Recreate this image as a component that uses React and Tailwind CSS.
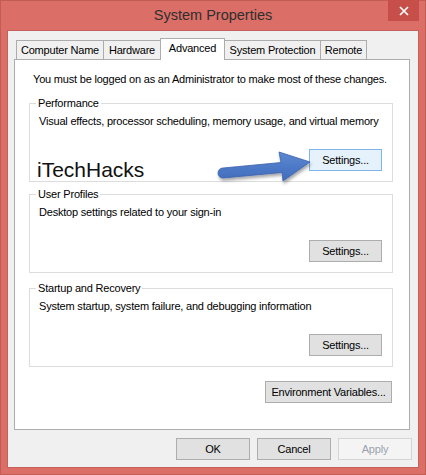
import React from 'react';

const tabs = [
  { label: 'Computer Name', w: 'w-[88px]' },
  { label: 'Hardware', w: 'w-[58px]' },
  { label: 'Advanced', w: 'w-[65px]', active: true },
  { label: 'System Protection', w: 'w-[97px]' },
  { label: 'Remote', w: 'w-[47px]' },
];

const Button = ({ children, variant = 'normal', className = '' }) => {
  const styles = {
    normal: 'bg-[#e1e1e1] border-[#adadad] text-black',
    hover: 'bg-[#e5f1fb] border-[#7eb4ea] text-black',
    disabled: 'bg-[#f4f4f4] border-[#d5d5d5] text-[#9aa3ad]',
  };
  return (
    <div className={`h-[22px] border flex items-center justify-center leading-[15px] ${styles[variant]} ${className}`}>
      {children}
    </div>
  );
};

const Group = ({ title, text, hover, className = '' }) => (
  <fieldset className={`w-[364px] ml-[14px] border border-[#dcdcdc] pl-[9px] pr-[10px] pb-[10px] ${className}`}>
    <legend className="-ml-[3px] px-[2px] leading-[14px]">{title}</legend>
    <div className="mt-[4px] leading-[15px]">{text}</div>
    <div className="mt-[20px] flex justify-end">
      <Button variant={hover ? 'hover' : 'normal'} className="w-[73px]">Settings...</Button>
    </div>
  </fieldset>
);

// blue callout arrow pointing at the Performance "Settings..." button
const Arrow = () => (
  <svg width="104" height="42" viewBox="0 0 104 42" className="absolute left-[200px] top-[88px]">
    <defs>
      <linearGradient id="ag" x1="0" y1="0" x2="0" y2="1">
        <stop offset="0" stopColor="#5d88d2" />
        <stop offset="1" stopColor="#3f6cbc" />
      </linearGradient>
      <filter id="sh" x="-20%" y="-30%" width="140%" height="170%">
        <feDropShadow dx="1" dy="2.5" stdDeviation="1.6" floodColor="#000" floodOpacity="0.35" />
      </filter>
    </defs>
    <path
      d="M8 20 L66 14.5 L64 4 L95 14 L68 33 L67 24.5 L8 30 A5 5 0 0 1 8 20 Z"
      fill="url(#ag)"
      stroke="#3a62ad"
      strokeWidth="0.8"
      strokeLinejoin="round"
      filter="url(#sh)"
    />
  </svg>
);

export default function App() {
  return (
    <div className="w-[426px] h-[475px] bg-[#db6e66] border border-[#c35c54] flex flex-col font-['Liberation_Sans',Arial,sans-serif] text-[11px] tracking-[-0.2px] text-black">
      {/* title bar */}
      <div className="relative h-[29px] flex items-center justify-center">
        <span className="text-[14.5px] tracking-normal text-[#2f2f2f] mt-[1px]">System Properties</span>
        <div className="absolute right-[6px] -top-px w-[31px] h-[21px] bg-[#c74f4a] flex items-center justify-center">
          <svg width="10" height="10" viewBox="0 0 10 10">
            <path d="M1 1 L9 9 M9 1 L1 9" stroke="#fff" strokeWidth="1.7" />
          </svg>
        </div>
      </div>

      {/* client */}
      <div className="mx-[6px] mb-[6px] flex-1 bg-[#f0f0f0] border border-[#c6605a] flex flex-col">
        {/* tabs */}
        <div className="ml-[8px] pt-[7px] flex items-end">
          {tabs.map((t, i) => (
            <div
              key={t.label}
              className={`${t.w} ${i > 0 ? '-ml-px' : ''} border-t border-l border-r border-[#acacac] flex items-center justify-center leading-[15px] ${
                t.active ? 'h-[22px] -mb-px bg-white relative z-10 pb-[2px]' : 'h-[19px] bg-[#f0f0f0]'
              }`}
            >
              {t.label}
            </div>
          ))}
        </div>

        {/* panel */}
        <div className="relative ml-[6px] w-[396px] h-[371px] bg-white border border-[#acacac] pt-[12px]">
          <div className="pl-[18px] leading-[15px]">
            You must be logged on as an Administrator to make most of these changes.
          </div>

          <Group
            className="mt-[9px]"
            title="Performance"
            text="Visual effects, processor scheduling, memory usage, and virtual memory"
            hover
          />
          <Group className="mt-[5px]" title="User Profiles" text="Desktop settings related to your sign-in" />
          <Group
            className="mt-[8px]"
            title="Startup and Recovery"
            text="System startup, system failure, and debugging information"
          />

          <div className="mt-[14px] mr-[17px] flex justify-end">
            <Button className="w-[127px]">Environment Variables...</Button>
          </div>

          {/* watermark + arrow overlay */}
          <div className="absolute left-[22px] top-[99px] text-[21px] leading-[21px] tracking-normal text-[#111]">
            iTechHacks
          </div>
          <Arrow />
        </div>

        {/* dialog buttons */}
        <div className="mt-[8px] mr-[6px] flex justify-end gap-[7px]">
          <Button className="w-[74px]">OK</Button>
          <Button className="w-[74px]">Cancel</Button>
          <Button variant="disabled" className="w-[74px]">Apply</Button>
        </div>
      </div>
    </div>
  );
}
